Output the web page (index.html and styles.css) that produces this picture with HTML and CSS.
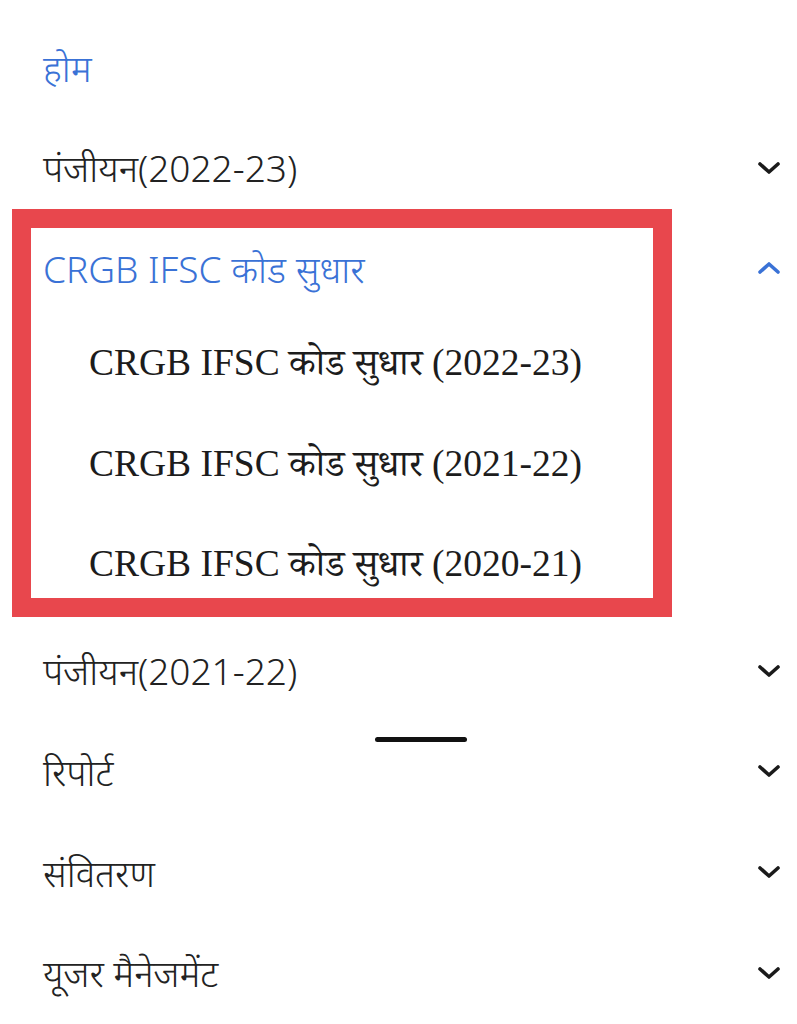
FILE: index.html
```html
<!DOCTYPE html>
<html lang="hi">
<head>
<meta charset="utf-8">
<link rel="stylesheet" href="styles.css">
</head>
<body>
<nav class="menu">
  <div class="row active"><span class="label">होम</span></div>
  <div class="row"><span class="label">पंजीयन(2022-23)</span>
    <svg class="chev" viewBox="0 0 24 14"><path d="M3 3 L12 11 L21 3"/></svg></div>
  <div class="group">
    <div class="row active"><span class="label">CRGB IFSC कोड सुधार</span>
      <svg class="chev up" viewBox="0 0 24 14"><path d="M3 11 L12 3 L21 11"/></svg></div>
    <div class="row sub"><span class="label">CRGB IFSC कोड सुधार (2022-23)</span></div>
    <div class="row sub"><span class="label">CRGB IFSC कोड सुधार (2021-22)</span></div>
    <div class="row sub"><span class="label">CRGB IFSC कोड सुधार (2020-21)</span></div>
    <div class="highlight"></div>
  </div>
  <div class="row"><span class="label">पंजीयन(2021-22)</span>
    <svg class="chev" viewBox="0 0 24 14"><path d="M3 3 L12 11 L21 3"/></svg></div>
  <div class="row"><span class="label">रिपोर्ट</span>
    <svg class="chev" viewBox="0 0 24 14"><path d="M3 3 L12 11 L21 3"/></svg></div>
  <div class="row"><span class="label">संवितरण</span>
    <svg class="chev" viewBox="0 0 24 14"><path d="M3 3 L12 11 L21 3"/></svg></div>
  <div class="row"><span class="label">यूजर मैनेजमेंट</span>
    <svg class="chev" viewBox="0 0 24 14"><path d="M3 3 L12 11 L21 3"/></svg></div>
  <div class="handle"></div>
</nav>
</body>
</html>
```
FILE: styles.css
```css
html, body {
  margin: 0;
  background: #ffffff;
}
body {
  font-family: "Noto Sans", "Noto Sans Devanagari", sans-serif;
  font-weight: 300;
  color: #222222;
  overflow: hidden;
}
.menu {
  position: relative;
  padding-top: 17px;
}
.row {
  display: flex;
  align-items: center;
  justify-content: space-between;
  height: 100.6px;
  padding: 0 16px 0 43px;
  box-sizing: border-box;
  font-size: 37px;
}
.label {
  white-space: nowrap;
}
.row.active {
  color: #3a72d6;
}
.row.sub {
  padding-left: 89px;
  font-family: "Liberation Serif", "Noto Serif Devanagari", serif;
  font-weight: 400;
  font-size: 37.5px;
  color: #1c1c1c;
}
.chev {
  width: 24px;
  height: 14px;
  flex: none;
  fill: none;
  stroke: #1a1a1a;
  stroke-width: 3.6;
  stroke-linecap: round;
  stroke-linejoin: round;
}
.chev.up {
  stroke: #3a72d6;
}
.group {
  position: relative;
}
.highlight {
  position: absolute;
  left: 12px;
  top: -9px;
  width: 660px;
  height: 408px;
  box-sizing: border-box;
  border: 19px solid #e8474d;
  pointer-events: none;
}
.handle {
  position: absolute;
  left: 375px;
  top: 737px;
  width: 92px;
  height: 5px;
  border-radius: 3px;
  background: #111111;
}
```
